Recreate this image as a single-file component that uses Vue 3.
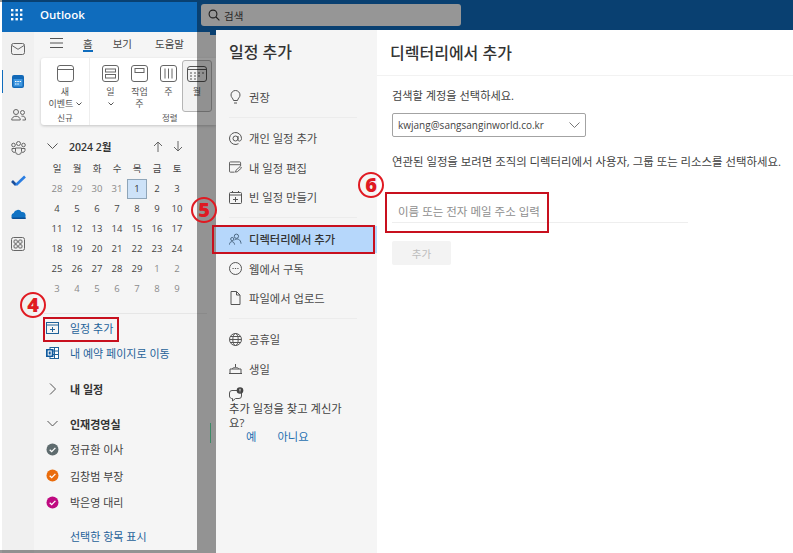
<script setup>
const weekdays = ['일', '월', '화', '수', '목', '금', '토']
const febDays = [
  [28, 1], [29, 1], [30, 1], [31, 1], [1, 0], [2, 0], [3, 0],
  [4, 0], [5, 0], [6, 0], [7, 0], [8, 0], [9, 0], [10, 0],
  [11, 0], [12, 0], [13, 0], [14, 0], [15, 0], [16, 0], [17, 0],
  [18, 0], [19, 0], [20, 0], [21, 0], [22, 0], [23, 0], [24, 0],
  [25, 0], [26, 0], [27, 0], [28, 0], [29, 0], [1, 1], [2, 1],
  [3, 1], [4, 1], [5, 1], [6, 1], [7, 1], [8, 1], [9, 1]
].map(([n, muted], i) => ({ n, muted: !!muted, today: i === 4 }))
const people = [
  { name: '정규환 이사', color: '#5e6b6e' },
  { name: '김창범 부장', color: '#ea6c0c' },
  { name: '박은영 대리', color: '#bf0a80' }
]
</script>

<template>
  <div class="page">
    <header class="topbar">
      <div class="brand">
        <svg class="waffle" width="12" height="12" viewBox="0 0 12 12" fill="#fff">
          <rect v-for="p in [0,4.5,9]" :key="'a'+p" :x="p" y="0" width="2.4" height="2.4" />
          <rect v-for="p in [0,4.5,9]" :key="'b'+p" :x="p" y="4.5" width="2.4" height="2.4" />
          <rect v-for="p in [0,4.5,9]" :key="'c'+p" :x="p" y="9" width="2.4" height="2.4" />
        </svg>
        <span class="brand-name">Outlook</span>
      </div>
      <div class="search">
        <svg width="12" height="12" viewBox="0 0 12 12" fill="none" stroke="#333" stroke-width="1.1">
          <circle cx="5" cy="5" r="3.9" /><path d="M8 8l3.4 3.4" />
        </svg>
        <span>검색</span>
      </div>
      <i class="notch"></i>
    </header>

    <div class="body">
      <nav class="rail">
        <div class="rail-item">
          <svg width="14" height="12" viewBox="0 0 14 12" fill="none" stroke="#666" stroke-width="1">
            <rect x=".5" y=".5" width="13" height="11" rx="2" /><path d="M1 2.5l6 3.8 6-3.8" />
          </svg>
        </div>
        <div class="rail-item active">
          <svg width="12" height="13" viewBox="0 0 12 13">
            <rect width="12" height="13" rx="2" fill="#1269b8" />
            <rect x="1.5" y="4" width="9" height="7.5" fill="#3f97e0" />
            <path d="M3 6.500h1.500M5.300 6.500h1.500M7.600 6.500h1.500M3 9h1.500M5.300 9h1.500" stroke="#fff" stroke-width="1" />
          </svg>
        </div>
        <div class="rail-item">
          <svg width="15" height="12" viewBox="0 0 15 12" fill="none" stroke="#666" stroke-width="1">
            <circle cx="5" cy="3" r="2.5" /><circle cx="11.5" cy="3.5" r="2" />
            <path d="M.7 11c0-5 8.600-5 8.600 0zM10.500 7.200c2.500-.5 4 .7 4 3.800h-3" />
          </svg>
        </div>
        <div class="rail-item">
          <svg width="15" height="14" viewBox="0 0 15 14" fill="none" stroke="#666" stroke-width="1">
            <circle cx="7.5" cy="2.5" r="2" /><circle cx="2.5" cy="4" r="1.8" /><circle cx="12.5" cy="4" r="1.8" />
            <path d="M4.500 7h6v3.500a3 3 0 0 1-6 0zM4 7.500H1v2a2.500 2.500 0 0 0 3 1.800M11 7.500h3v2a2.500 2.500 0 0 1-3 1.800" />
          </svg>
        </div>
        <div class="rail-item">
          <svg width="15" height="12" viewBox="0 0 15 12" fill="none">
            <path d="M1 6l4 4" stroke="#1a4f9c" stroke-width="2.6" />
            <path d="M5 10l9-8.500" stroke="#2a7de1" stroke-width="2.6" />
          </svg>
        </div>
        <div class="rail-item">
          <svg width="15" height="10" viewBox="0 0 15 10">
            <path d="M3.500 10a3 3 0 0 1-.8-5.900A4.300 4.300 0 0 1 10.600 3a3.500 3.500 0 0 1 .9 7z" fill="#0f72c4" />
            <path d="M0 8.500h15V9a1 1 0 0 1-1 1H3a3 3 0 0 1-3-1.500z" fill="#0a4f96" />
          </svg>
        </div>
        <div class="rail-item apps">
          <svg width="14" height="14" viewBox="0 0 14 14" fill="none" stroke="#666" stroke-width="1">
            <rect x=".5" y=".5" width="13" height="13" rx="2" />
            <rect x="3" y="3" width="3.3" height="3.3" rx="1" /><rect x="7.7" y="3" width="3.3" height="3.3" rx="1" />
            <rect x="3" y="7.7" width="3.3" height="3.3" rx="1" /><rect x="7.7" y="7.7" width="3.3" height="3.3" rx="1" />
          </svg>
        </div>
      </nav>

      <aside class="pane">
        <div class="tabs">
          <svg width="13" height="10" viewBox="0 0 13 10" stroke="#555" stroke-width="1"><path d="M0 .5h13M0 5h13M0 9.500h13" /></svg>
          <span class="tab current">홈</span>
          <span class="tab">보기</span>
          <span class="tab help">도움말</span>
        </div>

        <div class="ribbon">
          <section class="group first">
            <div class="rbtn">
              <svg width="17" height="17" viewBox="0 0 17 17" fill="none" stroke="#666" stroke-width="1">
                <rect x=".5" y=".5" width="16" height="16" rx="2.5" /><path d="M.5 4.500h16" />
              </svg>
              <span class="rlabel">새<br />이벤트
                <svg class="inline-chev" width="6" height="4" viewBox="0 0 6 4" fill="none" stroke="#555"><path d="M.5.500L3 3 5.500.500" /></svg>
              </span>
            </div>
            <div class="glabel">신규</div>
          </section>
          <section class="group">
            <div class="rbtns">
              <div class="rbtn">
                <svg width="17" height="17" viewBox="0 0 17 17" fill="none" stroke="#666" stroke-width="1">
                  <rect x=".5" y=".5" width="16" height="16" rx="2.5" /><rect x="3.5" y="4" width="10" height="3" /><rect x="3.5" y="9.5" width="10" height="3.5" />
                </svg>
                <span class="rlabel">일<br />
                  <svg class="inline-chev" width="6" height="4" viewBox="0 0 6 4" fill="none" stroke="#555"><path d="M.5.500L3 3 5.500.500" /></svg>
                </span>
              </div>
              <div class="rbtn">
                <svg width="17" height="17" viewBox="0 0 17 17" fill="none" stroke="#666" stroke-width="1">
                  <rect x=".5" y=".5" width="16" height="16" rx="2.5" /><rect x="4" y="3.5" width="9" height="4" />
                </svg>
                <span class="rlabel">작업<br />주</span>
              </div>
              <div class="rbtn">
                <svg width="17" height="17" viewBox="0 0 17 17" fill="none" stroke="#666" stroke-width="1">
                  <rect x=".5" y=".5" width="16" height="16" rx="2.5" /><path d="M5 3.500v10M8.500 3.500v10M12 3.500v10" />
                </svg>
                <span class="rlabel">주</span>
              </div>
              <div class="rbtn month">
                <svg width="20" height="16" viewBox="0 0 20 16" fill="none" stroke="#555" stroke-width="1">
                  <rect x=".5" y=".5" width="19" height="15" rx="2.5" /><path d="M.5 3.500h19" />
                  <path d="M3 7h2M7 7h2M11 7h2M15 7h2M3 10h2M7 10h2M11 10h2M3 13h2M7 13h2" stroke-width="1.2" />
                </svg>
                <span class="rlabel">월</span>
              </div>
            </div>
            <div class="glabel arrange">정렬</div>
          </section>
        </div>

        <div class="month-head">
          <svg width="11" height="6" viewBox="0 0 11 6" fill="none" stroke="#555"><path d="M.5.500l5 5 5-5" /></svg>
          <strong>2024 2월</strong>
          <span class="arrows">
            <svg width="10" height="11" viewBox="0 0 10 11" fill="none" stroke="#666"><path d="M5 11V1M1 5l4-4 4 4" /></svg>
            <svg width="10" height="11" viewBox="0 0 10 11" fill="none" stroke="#666"><path d="M5 0v10M1 6l4 4 4-4" /></svg>
          </span>
        </div>
        <div class="cal">
          <span v-for="d in weekdays" :key="d" class="wd">{{ d }}</span>
          <span v-for="(d, i) in febDays" :key="i" class="day" :class="{ muted: d.muted, today: d.today }">{{ d.n }}</span>
        </div>

        <div class="rule"></div>
        <a class="lrow link">
          <svg width="13" height="12" viewBox="0 0 13 12" fill="none" stroke="#1f6299" stroke-width="1">
            <rect x=".5" y=".5" width="12" height="11" /><path d="M.5 3h12M6.500 5v5M4 7.500h5" />
          </svg>
          <span>일정 추가</span>
        </a>
        <a class="lrow link">
          <svg width="13" height="12" viewBox="0 0 13 12">
            <rect x="4" y=".5" width="8.5" height="11" fill="#fff" stroke="#1f6299" /><path d="M5 4h7M5 7.500h7M8.500 1v10" stroke="#1f6299" />
            <rect x="0" y="2" width="7.5" height="8" fill="#0f5a9e" /><rect x="2.2" y="4" width="3" height="4" fill="none" stroke="#fff" />
          </svg>
          <span>내 예약 페이지로 이동</span>
        </a>
        <div class="lrow head gap1">
          <svg width="13" height="12" viewBox="0 0 13 12" fill="none" stroke="#555"><path d="M4 .5l5.500 5.500L4 11.500" /></svg>
          <span>내 일정</span>
        </div>
        <div class="lrow head gap2">
          <svg width="13" height="8" viewBox="0 0 13 8" fill="none" stroke="#555"><path d="M1.500 1l5 5 5-5" /></svg>
          <span>인재경영실</span>
        </div>
        <div class="people">
          <div v-for="p in people" :key="p.name" class="lrow person">
            <svg width="13" height="13" viewBox="0 0 13 13">
              <circle cx="6.5" cy="6.5" r="6" :fill="p.color" />
              <path d="M3.700 6.700l2 1.900 3.700-3.700" fill="none" stroke="#fff" stroke-width="1.3" />
            </svg>
            <span>{{ p.name }}</span>
          </div>
        </div>
        <a class="lrow link showsel"><span>선택한 항목 표시</span></a>
      </aside>
    </div>

    <!-- dimmed surface of the modal, with the folder pane left clear -->
    <div class="dim dim-top"></div>
    <div class="dim dim-right"></div>
    <div class="dim dim-bottom"></div>
    <i class="green"></i>

    <div class="dialog">
      <div class="dnav">
        <h2>일정 추가</h2>
        <div class="ditem">
          <svg width="13" height="14" viewBox="0 0 13 14" fill="none" stroke="#555"><path d="M4.500 10.500C4 8 2 7.500 2 5a4.500 4.500 0 0 1 9 0c0 2.500-2 3-2.500 5.500zM5 13h3" /></svg>
          <span>권장</span>
        </div>
        <div class="dsep"></div>
        <div class="ditem">
          <svg width="13" height="13" viewBox="0 0 13 13" fill="none" stroke="#555"><circle cx="6.5" cy="6.5" r="2.5" /><path d="M9 4v3.500c0 2.500 3.500 2 3.500-1A6 6 0 1 0 9.500 11.700" /></svg>
          <span>개인 일정 추가</span>
        </div>
        <div class="ditem">
          <svg width="14" height="13" viewBox="0 0 14 13" fill="none" stroke="#555"><path d="M6 11.500H1.500a1 1 0 0 1-1-1v-9a1 1 0 0 1 1-1h10a1 1 0 0 1 1 1V5M.5 3.500h12M7 11.500l.5-2 4.500-4 1.500 1.500-4.500 4z" /></svg>
          <span>내 일정 편집</span>
        </div>
        <div class="ditem">
          <svg width="13" height="13" viewBox="0 0 13 13" fill="none" stroke="#555"><rect x=".5" y="1.5" width="12" height="11" rx="1" /><path d="M.5 4h12M3.500 0v2M9.500 0v2M6.500 6v5M4 8.500h5" /></svg>
          <span>빈 일정 만들기</span>
        </div>
        <div class="dsep"></div>
        <div class="ditem selected">
          <svg width="14" height="13" viewBox="0 0 14 13" fill="none" stroke="#44607a"><circle cx="8" cy="3" r="2.3" /><circle cx="3.5" cy="6" r="1.7" /><path d="M.5 12c0-4 5-4.500 5.500 0M6 7c3-2 6.500-1 7 4" /></svg>
          <span>디렉터리에서 추가</span>
        </div>
        <div class="ditem">
          <svg width="13" height="13" viewBox="0 0 13 13" fill="none" stroke="#555"><circle cx="6.5" cy="6.5" r="6" /><path d="M3.500 6.500h1.200M5.900 6.500h1.200M8.300 6.500h1.200" /></svg>
          <span>웹에서 구독</span>
        </div>
        <div class="ditem">
          <svg width="12" height="14" viewBox="0 0 12 14" fill="none" stroke="#555"><path d="M7 .5H1.500v13h9V4zM7 .5V4h3.500" /></svg>
          <span>파일에서 업로드</span>
        </div>
        <div class="dsep"></div>
        <div class="ditem">
          <svg width="13" height="13" viewBox="0 0 13 13" fill="none" stroke="#555"><circle cx="6.5" cy="6.5" r="6" /><ellipse cx="6.5" cy="6.5" rx="2.7" ry="6" /><path d="M.5 6.500h12M1.500 3.500h10M1.500 9.500h10" /></svg>
          <span>공휴일</span>
        </div>
        <div class="ditem">
          <svg width="13" height="11" viewBox="0 0 13 11" fill="none" stroke="#555"><path d="M1 10.500V6h11v4.500zM0 10.500h13M3 6c1-2 6-2 7 0M6.500 4V1" /></svg>
          <span>생일</span>
        </div>
        <div class="ask">
          <svg width="15" height="15" viewBox="0 0 15 15">
            <path d="M3 3.500h7a2.500 2.500 0 0 1 2.500 2.500v3A2.500 2.500 0 0 1 10 11.500H6.500L3.500 14v-2.500A2.500 2.500 0 0 1 .5 9V6A2.500 2.500 0 0 1 3 3.500z" fill="none" stroke="#555" />
            <circle cx="11" cy="3.500" r="3.3" fill="#444" /><path d="M11 1.800v2M11 4.600v.6" stroke="#fff" />
          </svg>
          <p>추가 일정을 찾고 계신가요?</p>
          <div class="ask-actions"><a>예</a><a>아니요</a></div>
        </div>
      </div>

      <div class="dmain">
        <h2>디렉터리에서 추가</h2>
        <div class="dcontent">
          <p class="first-p">검색할 계정을 선택하세요.</p>
          <div class="select">
            <span>kwjang@sangsanginworld.co.kr</span>
            <svg width="11" height="6" viewBox="0 0 11 6" fill="none" stroke="#777"><path d="M.5.500l5 5 5-5" /></svg>
          </div>
          <p class="second-p">연관된 일정을 보려면 조직의 디렉터리에서 사용자, 그룹 또는 리소스를 선택하세요.</p>
          <div class="field">이름 또는 전자 메일 주소 입력</div>
          <button class="add" type="button">추가</button>
        </div>
      </div>
    </div>

    <div class="mark mark4"></div>
    <div class="mark mark5"></div>
    <div class="mark mark6"></div>
    <div class="badge b4">4</div>
    <div class="badge b5">5</div>
    <div class="badge b6">6</div>
  </div>
</template>

<style>
html, body { margin: 0; background: #fff; }
</style>

<style scoped>
.page {
  position: relative;
  width: 793px;
  height: 553px;
  overflow: hidden;
  background: #fff;
  display: flex;
  flex-direction: column;
  font-family: "Open Sans", "Noto Sans CJK KR", sans-serif;
  font-size: 10.5px;
  color: #424242;
}
p, h2 { margin: 0; }
svg { display: block; flex: none; }

.topbar {
  position: relative;
  height: 32px;
  flex: none;
  margin-left: 2px;
  background: #0f6cbd;
  display: flex;
  align-items: center;
}
.brand { width: 199px; margin-top: -3px; display: flex; align-items: center; color: #fff; }
.waffle { margin-left: 9px; }
.brand-name { margin-left: 17px; font-size: 11.5px; font-weight: 600; }
.search {
  width: 260px;
  height: 22px;
  margin-top: -2px;
  border-radius: 3px;
  background: #fbfbfb;
  display: flex;
  align-items: center;
  gap: 4px;
  padding-left: 7px;
  box-sizing: border-box;
  color: #444;
}
.notch { position: absolute; left: 208px; top: 32px; width: 6px; height: 3px; background: #0f6cbd; }

.body { flex: 1; display: flex; min-height: 0; }
.rail {
  width: 32px;
  margin-left: 2px;
  flex: none;
  background: #f0f0f0;
  display: flex;
  flex-direction: column;
}
.rail-item { height: 33px; display: flex; align-items: center; justify-content: center; position: relative; }
.rail-item.apps { margin-top: -3px; }
.rail-item.active::before {
  content: "";
  position: absolute;
  left: 0;
  top: 5px;
  width: 1px;
  height: 23px;
  background: #0f6cbd;
}

.pane { width: 182px; flex: none; background: #f5f5f5; display: flex; flex-direction: column; }
.tabs { height: 26px; box-sizing: border-box; padding: 0 0 4px 16px; flex: none; display: flex; align-items: center; gap: 20px; }
.tab { position: relative; color: #444; }
.tab.help { margin-left: 3px; }
.tab.current::after {
  content: "";
  position: absolute;
  left: 0;
  right: 0;
  bottom: -1px;
  height: 2px;
  background: #0f6cbd;
}
.ribbon {
  height: 67px;
  flex: none;
  margin-left: 7px;
  background: #fff;
  border-radius: 3px 0 0 3px;
  box-shadow: 0 1px 3px rgba(0, 0, 0, .2);
  display: flex;
}
.group { display: flex; flex-direction: column; }
.group.first { width: 48px; border-right: 1px solid #eee; align-items: center; }
.rbtns { display: flex; height: 53px; padding-left: 6px; }
.rbtn {
  width: 29px;
  height: 53px;
  box-sizing: border-box;
  padding-top: 7px;
  display: flex;
  flex-direction: column;
  align-items: center;
  flex: none;
}
.group.first .rbtn { width: 48px; }
.rlabel { margin-top: 4px; font-size: 9px; line-height: 11.5px; text-align: center; color: #555; white-space: nowrap; }
.inline-chev { display: inline-block; vertical-align: 1px; }
.rbtn.month {
  width: 30px;
  height: 52px;
  margin-top: 2px;
  padding-top: 5px;
  border: 1px solid #b5b5b5;
  border-radius: 3px;
  background: #f2f2f2;
  margin-left: -1px;
}
.glabel { height: 12px; margin-top: 1px; line-height: 12px; font-size: 8.5px; color: #555; }
.arrange { padding-left: 72px; }

.month-head { height: 20px; margin-top: 11px; flex: none; display: flex; align-items: center; padding-left: 13px; }
.month-head strong { margin-left: 11px; font-weight: 600; font-size: 10.5px; color: #333; }
.arrows { display: flex; gap: 10px; margin-left: 42px; }
.cal {
  margin: 3px 0 0 13px;
  display: grid;
  grid-template-columns: repeat(7, 20px);
  grid-auto-rows: 20px;
  font-size: 9.5px;
  text-align: center;
  line-height: 20px;
  flex: none;
}
.wd { color: #444; }
.day { color: #444; box-sizing: border-box; }
.day.muted { color: #8a8a8a; }
.day.today { background: #cde2f8; border: 1px solid #8fa5b8; line-height: 18px; color: #333; }

.rule { height: 1px; margin: 14px 9px 1px 10px; background: #e6e6e6; flex: none; }
.lrow { height: 24px; flex: none; display: flex; align-items: center; gap: 11px; padding-left: 12px; font-size: 11px; color: #424242; }
.link { color: #1f6299; margin-top: 1px; }
.head { font-weight: 600; color: #333; }
.gap1 { margin-top: 12px; }
.gap2 { margin-top: 11px; }
.people { margin-top: 0; }
.person { height: 26.5px; }
.showsel { margin-top: 8px; padding-left: 36px; }

.dim { position: absolute; background: rgba(0, 0, 0, .4); }
.dim-top { left: 0; right: 0; top: 0; height: 2px; }
.dim-right { left: 197px; right: 0; top: 2px; bottom: 0; }
.dim-bottom { left: 0; width: 197px; height: 3px; bottom: 0; }
.green { position: absolute; left: 210px; top: 423px; width: 1px; height: 20px; background: #3c8a66; }

.dialog { position: absolute; left: 216px; right: 0; top: 30px; bottom: 0; display: flex; background: #fff; }
.dnav { width: 161px; flex: none; background: #f5f5f5; font-size: 11.3px; }
.dnav h2 { height: 52.25px; box-sizing: border-box; padding: 11px 0 0 13px; font-size: 16px; line-height: 22px; font-weight: 500; color: #333; }
.ditem { height: 29.5px; display: flex; align-items: center; gap: 7px; padding-left: 13px; color: #4a4a4a; }
.ditem svg { width: 13px; }
.ditem.selected { background: #b6d7fb; color: #333; font-weight: 500; height: 27px; margin: 7.5px 0 1.25px; }
.dsep { height: 1px; margin: 5.25px 20px 5.25px 13px; background: #ececec; }
.ask { padding: 4px 30px 0 13px; }
.ask p { line-height: 14px; word-break: break-all; }
.ask-actions { display: flex; gap: 21px; padding-left: 17px; line-height: 14px; color: #1f6fb0; }

.dmain { flex: 1; min-width: 0; }
.dmain h2 { height: 46px; box-sizing: border-box; padding: 12px 0 0 13px; font-size: 16px; line-height: 22px; font-weight: 500; color: #333; border-bottom: 1px solid #f2f2f2; }
.dcontent { padding-left: 15px; }
.first-p { margin-top: 12px; line-height: 16px; font-size: 11.2px; }
.select {
  width: 194px;
  height: 24px;
  margin-top: 9px;
  box-sizing: border-box;
  border: 1px solid #a3a3a3;
  border-radius: 2px;
  display: flex;
  align-items: center;
  justify-content: space-between;
  padding: 0 5px;
  font-size: 10px;
  color: #444;
}
.second-p { margin-top: 17px; line-height: 16px; white-space: nowrap; font-size: 11.4px; }
.field {
  width: 296px;
  height: 30px;
  margin-top: 23px;
  box-sizing: border-box;
  border-bottom: 1px solid #eee;
  padding: 11px 0 0 6px;
  line-height: 16px;
  font-size: 11.5px;
  color: #8e8e8e;
}
.add {
  display: block;
  width: 59px;
  height: 24px;
  margin-top: 18px;
  border: 0;
  border-radius: 2px;
  background: #f3f3f3;
  color: #bcbcbc;
  font: inherit;
  padding: 0;
}

.mark { position: absolute; border: 2px solid #c8101e; box-sizing: border-box; }
.mark4 { left: 43px; top: 317px; width: 76px; height: 25px; }
.mark5 { left: 212px; top: 225px; width: 163px; height: 29px; }
.mark6 { left: 385px; top: 192px; width: 164px; height: 41px; }
.badge {
  position: absolute;
  width: 26px;
  height: 26px;
  box-sizing: border-box;
  border: 2px solid #e01a22;
  border-radius: 50%;
  color: #e01a22;
  font-family: "Open Sans", sans-serif;
  font-size: 20px;
  font-weight: 800;
  line-height: 21px;
  text-align: center;
}
.b4 { left: 20px; top: 292px; }
.b5 { left: 191px; top: 197px; }
.b6 { left: 358px; top: 172px; }
</style>
